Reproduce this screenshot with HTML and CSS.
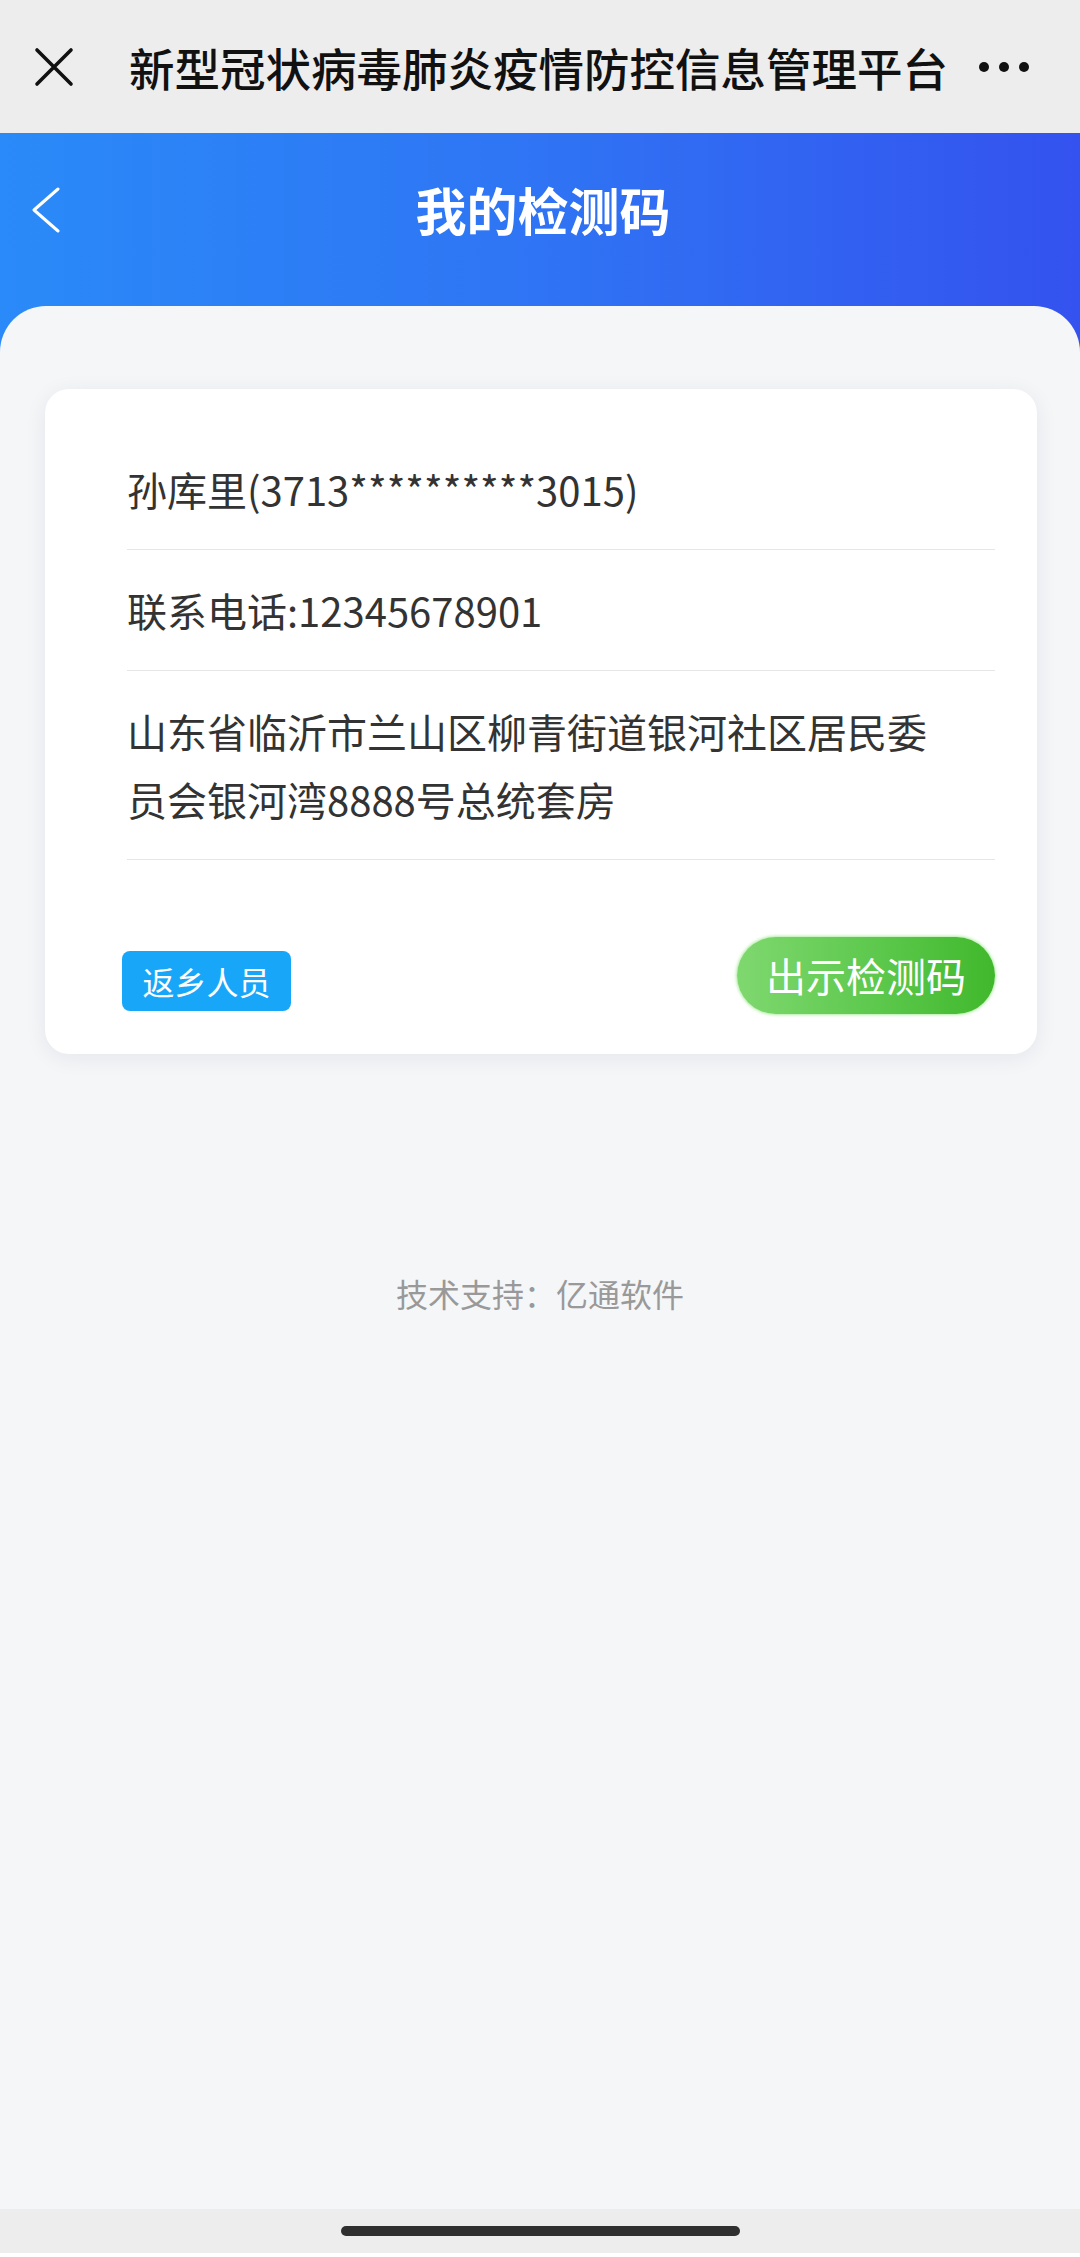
FILE: index.html
```html
<!DOCTYPE html>
<html lang="zh-CN">
<head>
<meta charset="utf-8">
<title>我的检测码</title>
<link rel="stylesheet" href="styles.css">
</head>
<body>
<div class="topbar">
  <svg class="close-icon" width="40" height="40" viewBox="0 0 40 40"><path d="M3 3 L37 37 M37 3 L3 37" stroke="#111" stroke-width="3.6" stroke-linecap="round" fill="none"/></svg>
  <div class="topbar-title">新型冠状病毒肺炎疫情防控信息管理平台</div>
  <svg class="more-icon" width="52" height="12" viewBox="0 0 52 12"><circle cx="6" cy="6" r="5" fill="#111"/><circle cx="26" cy="6" r="5" fill="#111"/><circle cx="46" cy="6" r="5" fill="#111"/></svg>
</div>
<div class="header">
  <svg class="back-icon" width="30" height="46" viewBox="0 0 30 46"><path d="M27 2 L3 23 L27 44" stroke="#fff" stroke-width="3" stroke-linecap="round" stroke-linejoin="round" fill="none"/></svg>
  <div class="header-title">我的检测码</div>
</div>
<div class="panel">
  <div class="card">
    <div class="row">孙库里(3713**********3015)</div>
    <div class="row">联系电话:12345678901</div>
    <div class="row address">山东省临沂市兰山区柳青街道银河社区居民委员会银河湾8888号总统套房</div>
    <div class="card-foot">
      <span class="tag">返乡人员</span>
      <button class="show-btn">出示检测码</button>
    </div>
  </div>
  <div class="support">技术支持：亿通软件</div>
</div>
<div class="navbar"><div class="handle"></div></div>
</body>
</html>
```
FILE: styles.css
```css
html, body {
  margin: 0;
  padding: 0;
}
body {
  width: 1080px;
  height: 2257px;
  display: flex;
  flex-direction: column;
  background: #ffffff;
  font-family: "Noto Sans CJK SC", "Noto Sans", sans-serif;
  overflow: hidden;
}
.topbar {
  height: 133px;
  flex: none;
  background: #ededed;
  display: flex;
  align-items: center;
  padding: 0 50px 0 34px;
  box-sizing: border-box;
}
.close-icon {
  flex: none;
  margin-top: 0;
}
.topbar-title {
  flex: 1;
  margin-left: 55px;
  font-size: 45.5px;
  font-weight: 500;
  color: #111;
  white-space: nowrap;
  letter-spacing: 0;
}
.more-icon {
  flex: none;
}
.header {
  height: 220px;
  flex: none;
  background: linear-gradient(90deg, #2a8af8 0%, #2f74f4 50%, #3452ef 100%);
  display: flex;
  align-items: flex-start;
  padding-top: 53px;
  box-sizing: border-box;
  position: relative;
}
.back-icon {
  position: absolute;
  left: 31px;
  top: 54px;
}
.header-title {
  flex: 1;
  text-align: center;
  color: #fff;
  font-size: 51px;
  font-weight: 700;
  line-height: 46px;
  padding-top: 0;
  padding-left: 6px;
}
.panel {
  flex: 1;
  margin-top: -47px;
  background: #f5f6f8;
  border-radius: 46px 46px 0 0;
  padding-top: 83px;
  display: flex;
  flex-direction: column;
  position: relative;
}
.card {
  margin: 0 43px 0 45px;
  background: #fff;
  border-radius: 24px;
  box-shadow: 0 4px 22px rgba(20, 30, 60, 0.07);
  padding: 40px 42px 40px 82px;
}
.row {
  padding: 26px 0;
  line-height: 68px;
  font-size: 40px;
  color: #333;
  border-bottom: 1px solid #e6e6e6;
}
.address {
  padding-right: 40px;
  word-break: break-all;
}
.card-foot {
  display: flex;
  justify-content: space-between;
  align-items: center;
  padding-top: 77px;
}
.tag {
  margin-left: -5px;
  margin-top: 10px;
  width: 169px;
  height: 60px;
  border-radius: 8px;
  background: #17a6f8;
  color: #fff;
  font-size: 32px;
  line-height: 60px;
  text-align: center;
}
.show-btn {
  width: 258px;
  height: 77px;
  border: none;
  border-radius: 39px;
  background: linear-gradient(90deg, #7fd86f 0%, #5cc84c 55%, #40b82c 100%);
  box-shadow: 0 0 3px 1px rgba(140, 230, 120, 0.7);
  color: #fff;
  font-family: "Noto Sans CJK SC", "Noto Sans", sans-serif;
  font-size: 40px;
  line-height: 77px;
  padding: 0;
}
.support {
  margin-top: 217px;
  text-align: center;
  font-size: 32px;
  line-height: 44px;
  color: #999;
}
.navbar {
  height: 44px;
  flex: none;
  margin-bottom: 4px;
  background: #ededed;
  display: flex;
  justify-content: center;
  align-items: center;
}
.handle {
  width: 399px;
  height: 10px;
  border-radius: 5px;
  background: #2f2f2f;
  margin-left: 0;
}
```
